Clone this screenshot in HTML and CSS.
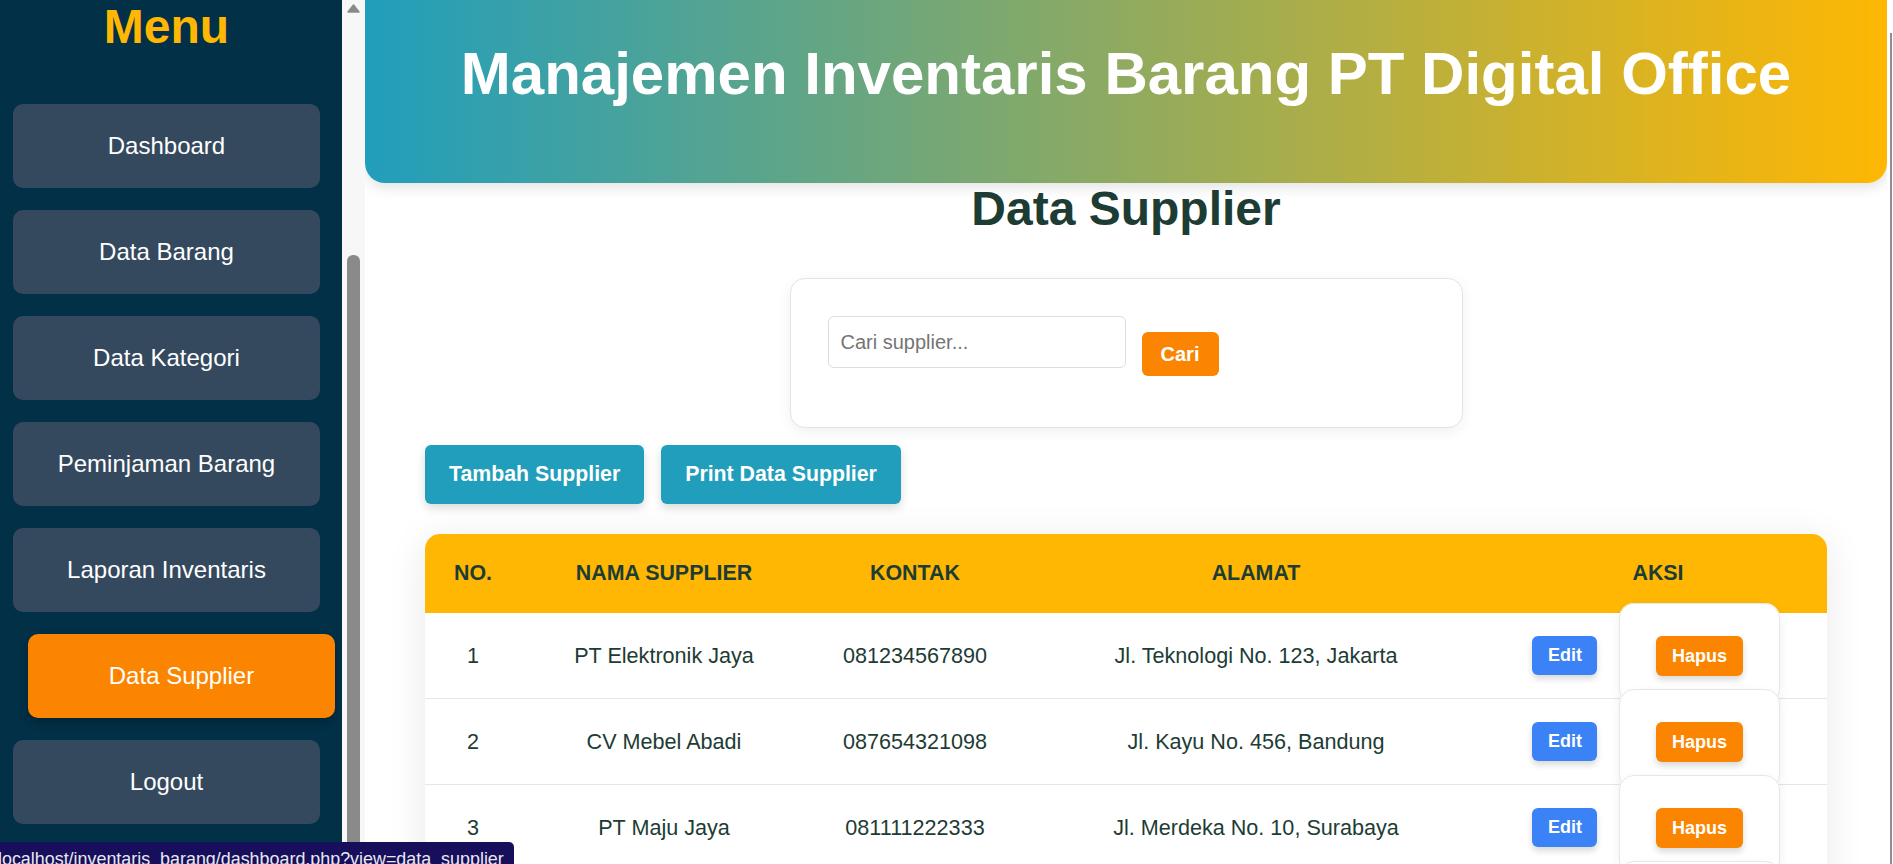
FILE: index.html
```html
<!DOCTYPE html>
<html lang="id">
<head>
<meta charset="utf-8">
<title>Data Supplier</title>
<link rel="stylesheet" href="styles.css">
</head>
<body>
<div class="layout">
  <aside class="sidebar">
    <h2 class="menu-title">Menu</h2>
    <nav class="menu">
      <a class="menu-item" href="#">Dashboard</a>
      <a class="menu-item" href="#">Data Barang</a>
      <a class="menu-item" href="#">Data Kategori</a>
      <a class="menu-item" href="#">Peminjaman Barang</a>
      <a class="menu-item" href="#">Laporan Inventaris</a>
      <a class="menu-item active" href="#">Data Supplier</a>
      <a class="menu-item" href="#">Logout</a>
    </nav>
  </aside>
  <div class="side-scroll">
    <svg class="scroll-arrow" width="13" height="9" viewBox="0 0 13 9"><path d="M6.5 1 L12 8 H1 Z" fill="#8a8a8a" stroke="#8a8a8a" stroke-width="1.5" stroke-linejoin="round"/></svg>
    <div class="scroll-thumb"></div>
  </div>
  <main class="content">
    <header class="banner">
      <h1 class="banner-title">Manajemen Inventaris Barang PT Digital Office</h1>
    </header>
    <section class="page">
      <h2 class="page-title">Data Supplier</h2>
      <form class="search-card">
        <input class="search-input" type="text" placeholder="Cari supplier...">
        <button class="btn-search" type="button">Cari</button>
      </form>
      <div class="actions">
        <a class="btn-primary" href="#">Tambah Supplier</a>
        <a class="btn-primary" href="#">Print Data Supplier</a>
      </div>
      <table class="data-table">
        <colgroup>
          <col class="c-no"><col class="c-name"><col class="c-contact"><col class="c-address"><col class="c-action">
        </colgroup>
        <thead>
          <tr><th>No.</th><th>Nama Supplier</th><th>Kontak</th><th>Alamat</th><th>Aksi</th></tr>
        </thead>
        <tbody>
          <tr>
            <td>1</td><td>PT Elektronik Jaya</td><td>081234567890</td><td>Jl. Teknologi No. 123, Jakarta</td>
            <td class="cell-action"><a class="btn-edit" href="#">Edit</a><form class="delete-form"><button class="btn-delete" type="button">Hapus</button></form></td>
          </tr>
          <tr>
            <td>2</td><td>CV Mebel Abadi</td><td>087654321098</td><td>Jl. Kayu No. 456, Bandung</td>
            <td class="cell-action"><a class="btn-edit" href="#">Edit</a><form class="delete-form"><button class="btn-delete" type="button">Hapus</button></form></td>
          </tr>
          <tr>
            <td>3</td><td>PT Maju Jaya</td><td>081111222333</td><td>Jl. Merdeka No. 10, Surabaya</td>
            <td class="cell-action"><a class="btn-edit" href="#">Edit</a><form class="delete-form"><button class="btn-delete" type="button">Hapus</button></form></td>
          </tr>
          <tr>
            <td>4</td><td>CV Sumber Makmur</td><td>082233445566</td><td>Jl. Pahlawan No. 5, Semarang</td>
            <td class="cell-action"><a class="btn-edit" href="#">Edit</a><form class="delete-form"><button class="btn-delete" type="button">Hapus</button></form></td>
          </tr>
        </tbody>
      </table>
    </section>
  </main>
  <div class="page-scroll"><div class="page-thumb"></div></div>
</div>
<div class="status-bubble">localhost/inventaris_barang/dashboard.php?view=data_supplier</div>
</body>
</html>
```

FILE: styles.css
```css
* { box-sizing: border-box; }

html, body {
  margin: 0;
  height: 100%;
  overflow: hidden;
  background: #ffffff;
  font-family: "Liberation Sans", Arial, sans-serif;
}

.layout {
  display: flex;
  height: 864px;
}

/* ---------- Sidebar ---------- */
.sidebar {
  width: 342px;
  flex: 0 0 342px;
  background: #023047;
  padding: 0 22px 0 13px;
  overflow: hidden;
}

.menu-title {
  margin: -1px 0 50px;
  font-size: 48px;
  line-height: 55px;
  font-weight: bold;
  color: #ffb703;
  text-align: center;
}

.menu {
  display: flex;
  flex-direction: column;
  gap: 22px;
}

.menu-item {
  display: flex;
  align-items: center;
  justify-content: center;
  height: 84px;
  border-radius: 10px;
  background: #34495e;
  color: #ffffff;
  font-size: 24px;
  text-decoration: none;
}

.menu-item.active {
  background: #fb8500;
  transform: translateX(15px);
  box-shadow: 0 4px 10px rgba(0, 0, 0, 0.25);
}

/* fake scrollbar of the sidebar */
.side-scroll {
  width: 23px;
  flex: 0 0 23px;
  background: #f7f7f7;
  display: flex;
  flex-direction: column;
  padding-left: 5px;
}

.scroll-arrow {
  display: block;
  margin-top: 4px;
}

.scroll-thumb {
  margin-top: 242px;
  width: 13px;
  flex: 1;
  background: #8a8a8a;
  border-radius: 6px 6px 0 0;
}

/* ---------- Main content ---------- */
.content {
  flex: 1;
  min-width: 0;
  background: #ffffff;
  overflow: hidden;
}

.banner {
  height: 183px;
  padding-top: 40px;
  background: linear-gradient(90deg, #219ebc 0%, #ffb703 100%);
  border-radius: 0 0 20px 20px;
  box-shadow: 0 4px 14px rgba(0, 0, 0, 0.12);
}

.banner-title {
  margin: 0;
  font-size: 60px;
  line-height: 68px;
  font-weight: bold;
  color: #ffffff;
  text-align: center;
}

.page {
  padding: 0 60px;
}

.page-title {
  margin: -2px 0 0;
  font-size: 48px;
  line-height: 55px;
  font-weight: bold;
  color: #1d3c34;
  text-align: center;
}

.search-card {
  width: 673px;
  height: 150px;
  margin: 42px auto 0;
  padding: 37px;
  display: flex;
  align-items: flex-start;
  gap: 16px;
  background: #ffffff;
  border: 1px solid #e4e4e4;
  border-radius: 15px;
  box-shadow: 0 4px 14px rgba(0, 0, 0, 0.06);
}

.search-input {
  width: 298px;
  height: 52px;
  padding: 0 12px;
  font-family: inherit;
  font-size: 20px;
  color: #333;
  border: 1px solid #dddddd;
  border-radius: 6px;
  outline: none;
}

.search-input::placeholder { color: #757575; }

.btn-search {
  margin-top: 16px;
  width: 77px;
  height: 44px;
  padding: 0;
  border: none;
  border-radius: 6px;
  background: #fb8500;
  color: #ffffff;
  font-family: inherit;
  font-size: 20px;
  font-weight: bold;
}

.actions {
  display: flex;
  gap: 17px;
  margin-top: 17px;
}

.btn-primary {
  display: inline-block;
  padding: 18px 24px;
  line-height: 23px;
  font-size: 21.3px;
  font-weight: bold;
  color: #ffffff;
  background: #219ebc;
  border-radius: 6px;
  text-decoration: none;
  box-shadow: 0 4px 10px rgba(0, 0, 0, 0.15);
}

/* ---------- Table ---------- */
.data-table {
  width: 100%;
  margin-top: 30px;
  border-collapse: separate;
  border-spacing: 0;
  table-layout: fixed;
  background: #ffffff;
  border-radius: 15px;
  box-shadow: 0 6px 40px rgba(0, 0, 0, 0.09);
  color: #1d3c34;
}

.c-no { width: 96px; }
.c-name { width: 286px; }
.c-contact { width: 216px; }
.c-address { width: 466px; }
.c-action { width: 338px; }

.data-table th {
  height: 79px;
  padding: 0;
  background: #ffb703;
  font-size: 21.4px;
  font-weight: bold;
  text-transform: uppercase;
  text-align: center;
}

.data-table th:first-child { border-top-left-radius: 15px; }
.data-table th:last-child { border-top-right-radius: 15px; }

.data-table td {
  height: 86px;
  padding: 0;
  font-size: 21.6px;
  text-align: center;
  vertical-align: middle;
  border-bottom: 1px solid #e6e6e6;
}

.data-table td.cell-action {
  padding-right: 4px;
}

.btn-edit {
  display: inline-block;
  vertical-align: middle;
  margin-right: 22px;
  padding: 9px 15.5px;
  line-height: 21px;
  font-size: 18px;
  font-weight: bold;
  color: #ffffff;
  background: #3b82f6;
  border-radius: 6px;
  text-decoration: none;
  box-shadow: 0 4px 6px rgba(0, 0, 0, 0.15);
}

.delete-form {
  display: inline;
  padding: 37px 36px;
  background: #ffffff;
  border: 1px solid #e6e6e6;
  border-radius: 15px;
  box-shadow: 0 4px 12px rgba(0, 0, 0, 0.06);
}

.btn-delete {
  display: inline-block;
  vertical-align: middle;
  padding: 9px 15.5px;
  line-height: 22px;
  border: none;
  font-family: inherit;
  font-size: 18px;
  font-weight: bold;
  color: #ffffff;
  background: #fb8500;
  border-radius: 6px;
  box-shadow: 0 4px 6px rgba(0, 0, 0, 0.15);
}

/* ---------- Page scrollbar edge ---------- */
.page-scroll {
  width: 6px;
  flex: 0 0 6px;
  background: #ffffff;
  padding-left: 3px;
}

.page-thumb {
  margin-top: 33px;
  width: 2px;
  height: 831px;
  background: #8f8f8f;
}

/* ---------- Browser status bubble ---------- */
.status-bubble {
  position: fixed;
  left: 0;
  bottom: -12px;
  width: 514px;
  height: 34px;
  line-height: 34px;
  font-size: 17.9px;
  color: #e8e8ee;
  background: #170f5c;
  border-radius: 0 5px 0 0;
  white-space: nowrap;
  overflow: hidden;
  text-indent: -2px;
}
```
